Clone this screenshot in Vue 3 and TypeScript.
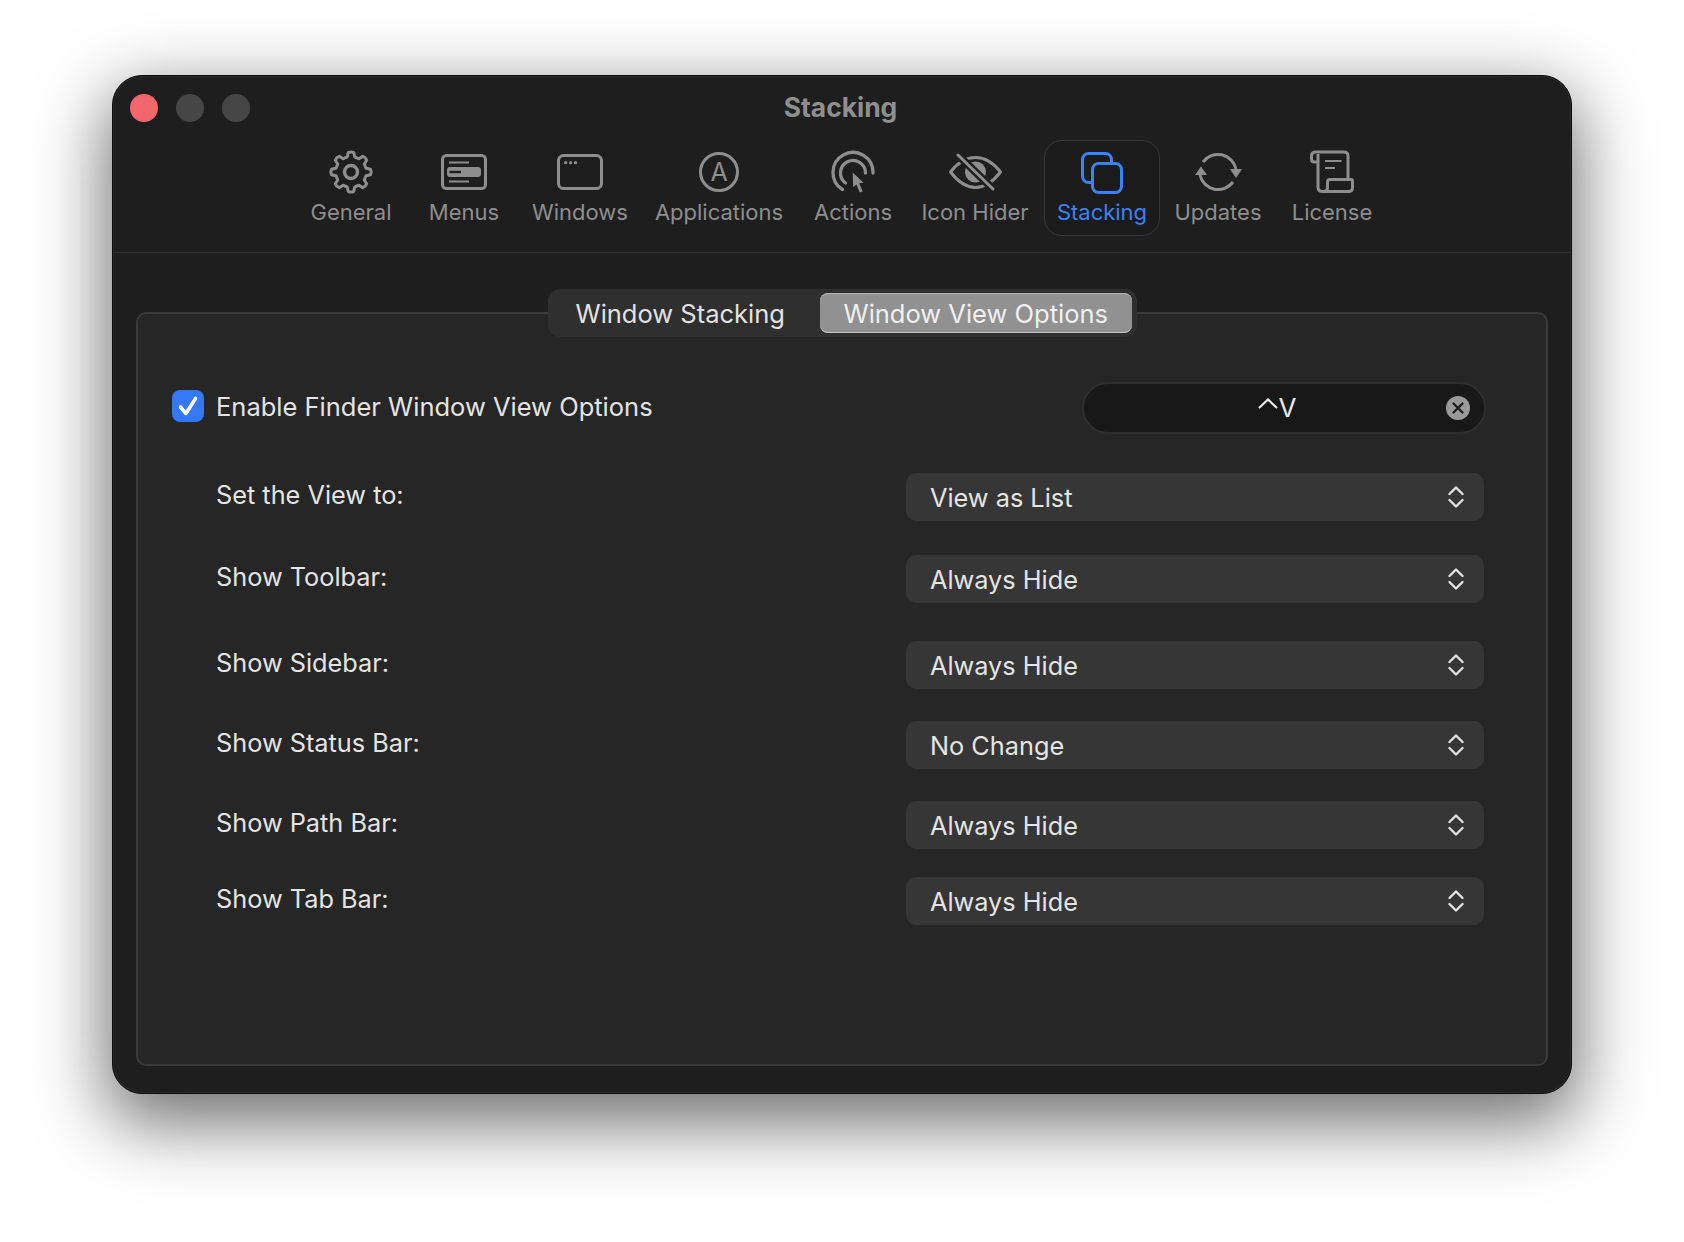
<script setup lang="ts">
import { computed } from 'vue';

type ToolbarItem = { name: string; label: string; width: number; };
type OptionRow = { label: string; value: string; top: number; };

const toolbarItems: ToolbarItem[] = [
    { name: 'general', label: 'General', width: 110 },
    { name: 'menus', label: 'Menus', width: 116 },
    { name: 'windows', label: 'Windows', width: 116 },
    { name: 'applications', label: 'Applications', width: 162 },
    { name: 'actions', label: 'Actions', width: 106 },
    { name: 'hider', label: 'Icon Hider', width: 138 },
    { name: 'stacking', label: 'Stacking', width: 116 },
    { name: 'updates', label: 'Updates', width: 116 },
    { name: 'license', label: 'License', width: 112 },
];

const optionRows: OptionRow[] = [
    { label: 'Set the View to:', value: 'View as List', top: 39 },
    { label: 'Show Toolbar:', value: 'Always Hide', top: 34 },
    { label: 'Show Sidebar:', value: 'Always Hide', top: 38 },
    { label: 'Show Status Bar:', value: 'No Change', top: 32 },
    { label: 'Show Path Bar:', value: 'Always Hide', top: 32 },
    { label: 'Show Tab Bar:', value: 'Always Hide', top: 28 },
];

// 8 tooth gear around the middle of the icon box
const gearPath = computed(() => {
    const cx = 28;
    const cy = 22;
    const teeth = 8;
    const pt = (r: number, a: number) => `${(cx + r * Math.sin(a)).toFixed(2)} ${(cy - r * Math.cos(a)).toFixed(2)}`;
    let d = '';
    for (let i = 0; i < teeth; i++) {
        const a = (i * 2 * Math.PI) / teeth;
        const step = Math.PI / teeth;
        d += `${i === 0 ? 'M' : 'L'}${pt(15.5, a - step * 0.62)} `;
        d += `L${pt(19.6, a - step * 0.36)} Q${pt(20.8, a)} ${pt(19.6, a + step * 0.36)} L${pt(15.5, a + step * 0.62)} `;
        const next = a + 2 * step;
        d += `Q${pt(15.2, a + step)} ${pt(15.5, next - step * 0.62)} `;
    }
    return `${d}Z`;
});
</script>

<template>
    <div class="stage">
        <div class="window">
            <div class="titlebar">
                <div class="lights">
                    <span class="light close"></span>
                    <span class="light"></span>
                    <span class="light"></span>
                </div>
                <div class="title">Stacking</div>
            </div>

            <div class="toolbar">
                <div
                    v-for="item in toolbarItems"
                    :key="item.name"
                    class="tool"
                    :class="{ active: item.name === 'stacking' }"
                    :style="{ width: `${item.width}px` }"
                >
                    <svg class="tool-icon" viewBox="0 0 56 44" width="56" height="44" fill="none" stroke="currentColor" stroke-width="3">
                        <template v-if="item.name === 'general'">
                            <path :d="gearPath" stroke-linejoin="round" />
                            <circle cx="28" cy="22" r="6.5" stroke-width="3.4" />
                        </template>
                        <template v-else-if="item.name === 'menus'">
                            <rect x="6.5" y="5.5" width="43" height="33" rx="4" />
                            <path d="M13 12.5H33M13 31.5H33" stroke-width="2" />
                            <rect x="11" y="17" width="34" height="10" rx="3" fill="currentColor" stroke="none" />
                            <path d="M13.5 22H25" stroke="#1e1e1e" stroke-width="2.4" />
                        </template>
                        <template v-else-if="item.name === 'windows'">
                            <rect x="6.5" y="5.5" width="43" height="33" rx="5" />
                            <g fill="currentColor" stroke="none">
                                <circle cx="13.7" cy="12.7" r="1.6" />
                                <circle cx="18.6" cy="12.7" r="1.6" />
                                <circle cx="23.5" cy="12.7" r="1.6" />
                            </g>
                        </template>
                        <template v-else-if="item.name === 'applications'">
                            <circle cx="28" cy="22" r="18.5" />
                            <text x="28" y="31" text-anchor="middle" class="glyph" fill="currentColor" stroke="none">A</text>
                        </template>
                        <template v-else-if="item.name === 'actions'">
                            <path d="M17.5 39.5A20 20 0 1 1 48 23" stroke-width="3.3" stroke-linecap="round" />
                            <path d="M20.5 33A12.5 12.5 0 1 1 40.5 23" stroke-width="3.3" stroke-linecap="round" />
                            <path d="M27 21L40 33.2L35 33.8L38.5 41.8L34.6 43.4L31.2 35.4L27.6 38.5Z" fill="currentColor" stroke="#1e1e1e" stroke-width="1.2" />
                        </template>
                        <template v-else-if="item.name === 'hider'">
                            <path d="M3.5 22C12 11 20 7.5 28.5 7.5C37 7.5 45 11 53.5 22C45 33 37 37.5 28.5 37.5C20 37.5 12 33 3.5 22Z" stroke-linejoin="round" />
                            <circle cx="28.5" cy="22" r="10.5" fill="currentColor" stroke="none" />
                            <path d="M11 5L46 39" stroke="#1e1e1e" stroke-width="8" />
                            <path d="M11 5L46 39" stroke-linecap="round" />
                        </template>
                        <template v-else-if="item.name === 'stacking'">
                            <rect x="8.5" y="3.5" width="29" height="29" rx="6" />
                            <rect x="18.5" y="13.5" width="29" height="29" rx="6" fill="#1c1c1c" />
                        </template>
                        <template v-else-if="item.name === 'updates'">
                            <path d="M13 12A18.5 18.5 0 0 1 46 19" />
                            <path d="M43 32A18.5 18.5 0 0 1 10 25" />
                            <path d="M40 19H52L46 28Z" fill="currentColor" stroke="none" />
                            <path d="M5 25H17L11 16.5Z" fill="currentColor" stroke="none" />
                        </template>
                        <template v-else>
                            <path d="M14 12H10.5Q7.5 12 7.5 9V6Q7.5 2 11.5 2H40Q44 2 44 6V29.5" stroke-linejoin="round" />
                            <path d="M14 4V37Q14 41.5 18.5 41.5H44.5Q48.5 41.5 48.5 37.5V31Q48.5 29.5 47 29.5H26Q23.5 29.5 23.5 32V37.5Q23.5 41.5 19 41.5" stroke-linejoin="round" />
                            <path d="M21 11H37.5M21 18H31" stroke-width="2.2" />
                        </template>
                    </svg>
                    <span class="tool-label">{{ item.label }}</span>
                </div>
            </div>

            <div class="panel">
                <div class="tabs">
                    <div class="tab">Window Stacking</div>
                    <div class="tab selected">Window View Options</div>
                </div>

                <div class="enable-row">
                    <span class="checkbox">
                        <svg viewBox="0 0 32 32" width="32" height="32" fill="none">
                            <path d="M8.5 17L14 23.5L23.5 8.5" stroke="#fff" stroke-width="3.6" stroke-linecap="round" stroke-linejoin="round" />
                        </svg>
                    </span>
                    <span class="enable-label">Enable Finder Window View Options</span>
                    <div class="shortcut">
                        <span class="keys">
                            <svg viewBox="0 0 20 11" width="20" height="11" fill="none">
                                <path d="M1 10L10 1.5L19 10" stroke="#e8e8e8" stroke-width="2.2" />
                            </svg>
                            <span>V</span>
                        </span>
                        <svg class="clear" viewBox="0 0 24 24" width="24" height="24">
                            <circle cx="12" cy="12" r="12" fill="#9a9a9a" />
                            <path d="M7.5 7.5L16.5 16.5M16.5 7.5L7.5 16.5" stroke="#1d1d1d" stroke-width="2.4" stroke-linecap="round" />
                        </svg>
                    </div>
                </div>

                <div
                    v-for="row in optionRows"
                    :key="row.label"
                    class="option-row"
                    :style="{ marginTop: `${row.top}px` }"
                >
                    <span class="option-label">{{ row.label }}</span>
                    <div class="select">
                        <span>{{ row.value }}</span>
                        <svg viewBox="0 0 16 24" width="16" height="24" fill="none">
                            <path d="M1.5 9L8 2.5L14.5 9M1.5 15L8 21.5L14.5 15" stroke="#e2e2e2" stroke-width="2.4" stroke-linecap="round" stroke-linejoin="round" />
                        </svg>
                    </div>
                </div>
            </div>
        </div>
    </div>
</template>

<style>
body {
    background: #fff;
}
</style>

<style scoped>
.stage {
    height: 1242px;
    box-sizing: border-box;
    padding-top: 75px;
    display: flex;
    justify-content: center;
    overflow: hidden;
    font-family: Inter, "Liberation Sans", sans-serif;
}

.window {
    width: 1460px;
    height: 1019px;
    box-sizing: border-box;
    display: flex;
    flex-direction: column;
    background: #1e1e1e;
    border: 1px solid #0c0c0c;
    border-radius: 30px;
    box-shadow: inset 0 0 0 1px #2a2a2a, 0 24px 70px 6px rgba(0, 0, 0, 0.56);
}

.titlebar {
    height: 64px;
    flex: none;
    display: grid;
    grid-template-columns: 1fr auto 1fr;
    align-items: center;
    padding: 0 17px;
}

.lights {
    display: flex;
    gap: 18px;
}

.light {
    width: 28px;
    height: 28px;
    border-radius: 50%;
    background: #464646;
}

.light.close {
    background: #f0666a;
}

.title {
    font-size: 26.4px;
    font-weight: 700;
    color: #8f8f8f;
    margin-top: -3px;
    margin-right: 3px;
}

.toolbar {
    flex: none;
    height: 113px;
    box-sizing: border-box;
    display: flex;
    justify-content: center;
    align-items: flex-start;
    border-bottom: 1px solid #2d2d2d;
}

.tool {
    height: 96px;
    flex: none;
    box-sizing: border-box;
    padding-top: 10px;
    display: flex;
    flex-direction: column;
    align-items: center;
    color: #8e8e8e;
    border-radius: 18px;
}

.tool.active {
    color: #3a82f7;
    background: #1b1b1b;
    border: 1px solid #363636;
    padding-top: 9px;
}

.tool-icon {
    flex: none;
}

.glyph {
    font-family: Inter, sans-serif;
    font-size: 25px;
    font-weight: 400;
}

.tool-label {
    margin-top: 5px;
    font-size: 22px;
    line-height: 26px;
    white-space: nowrap;
}

.panel {
    flex: 1;
    margin: 59px 23px 27px;
    padding: 0 60px 0 34px;
    background: #262626;
    border: 2px solid #3a3a3a;
    border-radius: 10px;
    display: flex;
    flex-direction: column;
}

.tabs {
    align-self: center;
    margin-top: -25px;
    margin-left: 26px;
    height: 48px;
    box-sizing: border-box;
    padding: 4px 5px;
    display: flex;
    align-items: stretch;
    background: #2f2f2f;
    border-radius: 12px;
    font-size: 25.5px;
    color: #e2e2e2;
    white-space: nowrap;
}

.tab {
    padding: 0 0 0 23px;
    display: flex;
    align-items: center;
    width: 267px;
    box-sizing: border-box;
}

.tab.selected {
    width: 312px;
    padding: 0 24px;
    background: #919191;
    border-radius: 8px;
    box-shadow: inset 0 1px 0 #b4b4b4, inset 0 -1px 0 #c4c4c4;
    color: #f0f0f0;
}

.enable-row {
    margin-top: 45px;
    display: flex;
    align-items: center;
    color: #e4e4e4;
    font-size: 25.5px;
}

.checkbox {
    width: 32px;
    height: 32px;
    flex: none;
    background: #3478f6;
    border-radius: 8px;
    display: block;
    margin-top: -5px;
}

.checkbox svg {
    display: block;
}

.enable-label {
    margin-left: 12px;
    flex: 1;
    margin-top: -4px;
}

.shortcut {
    width: 404px;
    height: 52px;
    box-sizing: border-box;
    padding: 0 14px 0 0;
    display: flex;
    align-items: center;
    justify-content: flex-end;
    background: #181818;
    border: 2px solid #2e2e2e;
    border-radius: 26px;
}

.keys {
    flex: 1;
    display: flex;
    justify-content: center;
    align-items: flex-start;
    gap: 1px;
    padding-left: 24px;
    color: #e8e8e8;
    font-size: 26px;
    line-height: 30px;
}

.keys svg {
    margin-top: 5px;
}

.clear {
    flex: none;
}

.option-row {
    display: flex;
    justify-content: space-between;
    align-items: center;
    padding-left: 44px;
    padding-right: 2px;
    font-size: 25.3px;
    color: #e4e4e4;
}

.option-label {
    margin-bottom: 6px;
}

.select {
    width: 578px;
    height: 48px;
    box-sizing: border-box;
    padding: 0 20px 0 24px;
    display: flex;
    align-items: center;
    justify-content: space-between;
    background: #363636;
    border-radius: 10px;
}
</style>
